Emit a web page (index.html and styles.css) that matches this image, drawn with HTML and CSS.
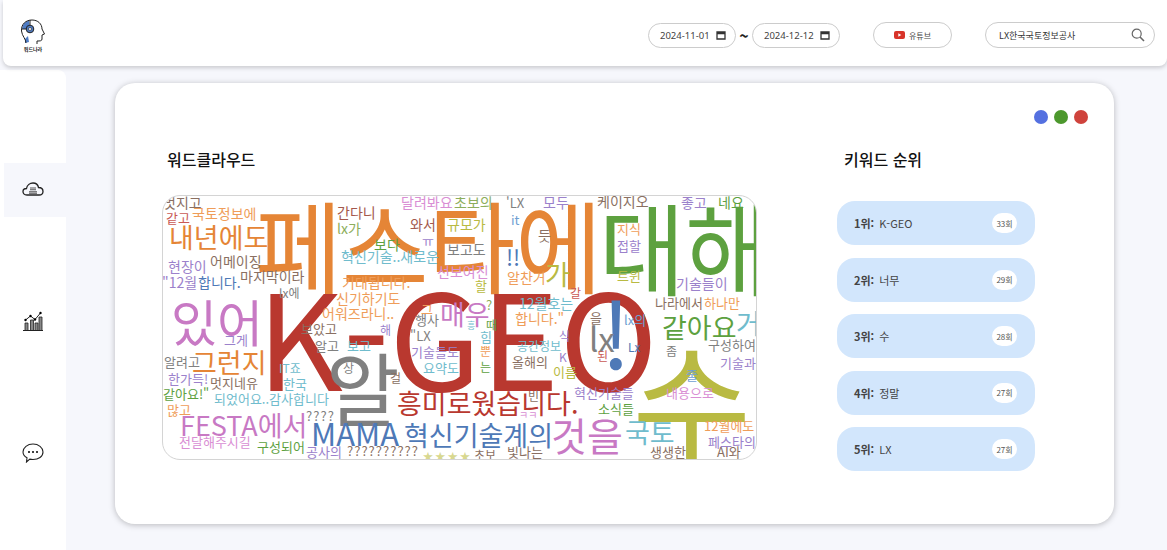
FILE: index.html
```html
<!DOCTYPE html>
<html lang="ko">
<head>
	<meta charset="utf-8">
	<title>워드클라우드</title>
	<link rel="stylesheet" href="styles.css">
</head>
<body>
	<header class="topbar">
		<div class="logo">
			<svg width="26" height="26" viewBox="0 0 26 26">
				<path d="M2 10 A9.500 9.500 0 0 1 9 1.500 L10 10 Z" fill="#4f7cc4"/>
				<path d="M2.500 12 L9 12 L6 22 C4 18 1.500 16 2.500 12 Z" fill="#fff"/>
				<path d="M5 20 L8 17 L9 23 L5 24 Z" fill="#4f7cc4"/>
				<path d="M6 24 C6 20 2 17 1.500 12 C1 5 6 1 12 1 C18 1 22 5 22 10 L24.500 15 L22 16 L22 20 C22 22 20 22 17 22 L17 25" fill="none" stroke="#222" stroke-width="1"/>
				<circle cx="10" cy="10" r="3.800" fill="#4f7cc4" stroke="#222" stroke-width="1"/>
				<circle cx="10" cy="10" r="1.500" fill="#fff" stroke="#222" stroke-width=".6"/>
				<path d="M1.500 10 H6 M10 1 V6" stroke="#222" stroke-width="1"/>
			</svg>
			<span class="logo-text">워드나라</span>
		</div>
		<div class="date-range">
			<div class="date-pill">
				<span>2024-11-01</span>
				<svg class="cal" width="10" height="10" viewBox="0 0 10 10"><path d="M1 2 H9 V9 H1 Z M1 3.500 H9" fill="none" stroke="#333" stroke-width="1.300"/></svg>
			</div>
			<span class="tilde">~</span>
			<div class="date-pill">
				<span>2024-12-12</span>
				<svg class="cal" width="10" height="10" viewBox="0 0 10 10"><path d="M1 2 H9 V9 H1 Z M1 3.500 H9" fill="none" stroke="#333" stroke-width="1.300"/></svg>
			</div>
		</div>
		<button class="yt-btn">
			<svg width="11" height="8" viewBox="0 0 11 8"><rect width="11" height="8" rx="2" fill="#d8342a"/><path d="M4.300 2.300 L7.300 4 L4.300 5.700 Z" fill="#fff"/></svg>
			<span>유튜브</span>
		</button>
		<div class="search">
			<span>LX한국국토정보공사</span>
			<svg width="14" height="14" viewBox="0 0 14 14"><circle cx="5.700" cy="5.700" r="4.500" fill="none" stroke="#666" stroke-width="1.200"/><path d="M9 9 L13 13" stroke="#666" stroke-width="1.600"/></svg>
		</div>
	</header>

	<div class="layout">
		<nav class="sidebar">
			<div class="nav-item active">
				<svg width="22" height="14" viewBox="0 0 22 14"><path d="M5 13 C2 13 1 11 1 9.500 C1 7.500 2.500 6.500 4.500 6.500 C5 3 8 1 11 1 C14 1 16 3 16.500 5.500 C19 5.500 21 7 21 9.500 C21 11.500 19.500 13 17 13 Z" fill="none" stroke="#222" stroke-width="1.300"/><path d="M8 6 H14 M8 7.800 H14 M7 9.800 H15 M7 11.300 H15" stroke="#555" stroke-width="1.100"/></svg>
			</div>
			<div class="nav-item">
				<svg width="20" height="20" viewBox="0 0 20 20"><path d="M2 19 V12 H5 V19 M7.500 19 V9 H10.500 V19 M12 19 V12 H15 V19 M16 19 V6 H19 V19" fill="#888" stroke="#222" stroke-width=".8"/><path d="M0 19.500 H20" stroke="#222"/><path d="M2.500 9 L7.500 5 L12 8.500 L17.500 2" fill="none" stroke="#222" stroke-width="1"/><circle cx="2.500" cy="9" r="1.200"/><circle cx="7.500" cy="5" r="1.200"/><circle cx="12" cy="8.500" r="1.200"/><circle cx="17.500" cy="2" r="1.200"/></svg>
			</div>
			<div class="nav-item">
				<svg width="22" height="20" viewBox="0 0 22 20"><path d="M11 1 C16.500 1 21 4.500 21 9 C21 13.500 16.500 16.500 11 16.500 C9.800 16.500 8.800 16.400 7.800 16.100 L4.500 19 L5 14.800 C2.500 13.400 1 11.400 1 9 C1 4.500 5.500 1 11 1 Z" fill="none" stroke="#222" stroke-width="1.100"/><circle cx="7" cy="9" r="1"/><circle cx="11" cy="9" r="1"/><circle cx="15" cy="9" r="1"/></svg>
			</div>
		</nav>

		<main class="card">
			<div class="dots">
				<span class="dot dot-blue"></span>
				<span class="dot dot-green"></span>
				<span class="dot dot-red"></span>
			</div>
			<div class="columns">
				<section class="cloud-col">
					<h2 class="title">워드클라우드</h2>
					<div class="cloud">
						<svg class="cloud-svg" viewBox="162 195 595 265" width="595" height="265">
							<text x="255" y="286" font-size="100" textLength="347" lengthAdjust="spacingAndGlyphs" class="c-orange">페스타에</text>
							<text x="599" y="288" font-size="100" textLength="172" lengthAdjust="spacingAndGlyphs" class="c-green">대해</text>
							<text x="257" y="391" font-size="133" class="c-red">K-GEO</text>
							<text x="632" y="454" font-size="130" class="c-olive">수</text>
							<text x="326" y="420" font-size="80" class="c-gray">알</text>
							<text x="601" y="370" font-size="92" class="c-blue">!</text>
							<text x="589" y="352" font-size="33" class="c-gray">lx</text>
							<text x="171" y="342" font-size="50" class="c-pink">있어</text>
							<text x="169" y="248" font-size="27" class="c-orange">내년에도</text>
							<text x="192" y="373" font-size="27" class="c-orange">그런지</text>
							<text x="440" y="325" font-size="27" class="c-pink">매우</text>
							<text x="662" y="338" font-size="27" class="c-green">같아요</text>
							<text x="736" y="334" font-size="27" class="c-cyan">거</text>
							<text x="545" y="285" font-size="27" class="c-olive">가</text>
							<text x="397" y="414" font-size="27" class="c-red">흥미로웠습니다.</text>
							<text x="180" y="436" font-size="27" class="c-pink">FESTA에서</text>
							<text x="311" y="446" font-size="31" class="c-blue">MAMA</text>
							<text x="404" y="446" font-size="27" class="c-blue">혁신기술계의</text>
							<text x="551" y="451" font-size="39" class="c-pink">것을</text>
							<text x="625" y="443" font-size="27" class="c-cyan">국토</text>
							<text x="506" y="266" font-size="22" class="c-blue">!!</text>

							<text x="163" y="208" font-size="14" class="c-brown">멋지고</text>
							<text x="166" y="223" font-size="13" class="c-rose">같고</text>
							<text x="192" y="219" font-size="14" class="c-peach">국토정보에</text>
							<text x="337" y="218" font-size="14" class="c-rust">간다니</text>
							<text x="337" y="234" font-size="14" class="c-lime">lx가</text>
							<text x="410" y="230" font-size="14" class="c-rust">와서</text>
							<text x="401" y="208" font-size="14" class="c-lpink">달려봐요</text>
							<text x="454" y="208" font-size="14" class="c-lime">초보의</text>
							<text x="447" y="230" font-size="14" class="c-olive">규모가</text>
							<text x="374" y="250" font-size="14" class="c-green">보다</text>
							<text x="422" y="246" font-size="13" class="c-purple">ㅠ</text>
							<text x="341" y="262" font-size="14" class="c-cyan">혁신기술..새로운</text>
							<text x="447" y="255" font-size="14" class="c-gray">보고도</text>
							<text x="437" y="277" font-size="14" class="c-lpink">선보여진</text>
							<text x="168" y="272" font-size="14" class="c-purple">현장이</text>
							<text x="210" y="267" font-size="14" class="c-brown">어메이징</text>
							<text x="240" y="282" font-size="14" class="c-brown">마지막이라</text>
							<text x="162" y="288" font-size="14" class="c-purple">"12월</text>
							<text x="198" y="288" font-size="14" class="c-blue">합니다.</text>
							<text x="279" y="298" font-size="12" class="c-gray">lx에</text>
							<text x="342" y="288" font-size="14" class="c-peach">기대됩니다.</text>
							<text x="336" y="304" font-size="14" class="c-peach">신기하기도</text>
							<text x="322" y="319" font-size="14" class="c-peach">어워즈라니..</text>
							<text x="506" y="208" font-size="13" class="c-gray">'LX</text>
							<text x="543" y="208" font-size="14" class="c-purple">모두</text>
							<text x="597" y="207" font-size="14" class="c-brown">케이지오</text>
							<text x="681" y="208" font-size="14" class="c-purple">좋고</text>
							<text x="718" y="208" font-size="14" class="c-green">네요</text>
							<text x="511" y="225" font-size="13" class="c-sky">it</text>
							<text x="538" y="241" font-size="14" class="c-brown">듯</text>
							<text x="617" y="234" font-size="13" class="c-peach">지식</text>
							<text x="617" y="251" font-size="13" class="c-purple">접할</text>
							<text x="507" y="283" font-size="14" class="c-peach">알찬거</text>
							<text x="617" y="281" font-size="13" class="c-olive">트윈</text>
							<text x="676" y="289" font-size="14" class="c-purple">기술들이</text>
							<text x="655" y="308" font-size="13" class="c-brown">나라에서</text>
							<text x="704" y="308" font-size="13" class="c-peach">하나만</text>
							<text x="570" y="298" font-size="12" class="c-rose">갈</text>
							<text x="475" y="291" font-size="13" class="c-olive">할</text>
							<text x="519" y="309" font-size="14" class="c-cyan">12월호는</text>
							<text x="515" y="324" font-size="14" class="c-peach">합니다."</text>
							<text x="421" y="314" font-size="13" class="c-peach">그</text>
							<text x="415" y="325" font-size="13" class="c-gray">행사</text>
							<text x="486" y="310" font-size="13" class="c-lime">?</text>
							<text x="486" y="330" font-size="12" class="c-green">때</text>
							<text x="467" y="329" font-size="9" class="c-cyan">흥</text>
							<text x="590" y="323" font-size="13" class="c-brown">을</text>
							<text x="624" y="325" font-size="13" class="c-sky">lx의</text>
							<text x="480" y="342" font-size="13" class="c-cyan">힘</text>
							<text x="480" y="356" font-size="12" class="c-peach">뿐</text>
							<text x="480" y="372" font-size="12" class="c-green">는</text>
							<text x="559" y="341" font-size="12" class="c-purple">식</text>
							<text x="517" y="351" font-size="12" class="c-cyan">공간정보</text>
							<text x="559" y="362" font-size="12" class="c-purple">K</text>
							<text x="628" y="352" font-size="12" class="c-blue">Lx</text>
							<text x="708" y="350" font-size="13" class="c-gray">구성하여</text>
							<text x="720" y="368" font-size="13" class="c-purple">기술과</text>
							<text x="666" y="356" font-size="12" class="c-gray">좀</text>
							<text x="597" y="361" font-size="12" class="c-rose">된</text>
							<text x="512" y="367" font-size="13" class="c-brown">올해의</text>
							<text x="553" y="377" font-size="13" class="c-olive">이름</text>
							<text x="686" y="380" font-size="13" class="c-sky">줄</text>
							<text x="666" y="398" font-size="13" class="c-lpink">내용으로</text>
							<text x="574" y="398" font-size="13" class="c-purple">혁신기술들</text>
							<text x="598" y="414" font-size="13" class="c-green">소식들</text>
							<text x="519" y="419" font-size="10" class="c-lpink">ㅋㅋ</text>
							<text x="528" y="401" font-size="12" class="c-brown">빈</text>
							<text x="390" y="383" font-size="12" class="c-brown">걸</text>
							<text x="301" y="334" font-size="13" class="c-brown">보았고</text>
							<text x="315" y="351" font-size="13" class="c-gray">알고</text>
							<text x="347" y="351" font-size="13" class="c-cyan">보고</text>
							<text x="380" y="335" font-size="12" class="c-purple">해</text>
							<text x="410" y="341" font-size="13" class="c-gray">"LX</text>
							<text x="411" y="357" font-size="13" class="c-purple">기술들도</text>
							<text x="423" y="373" font-size="13" class="c-cyan">요약도</text>
							<text x="224" y="345" font-size="13" class="c-purple">그게</text>
							<text x="164" y="367" font-size="13" class="c-gray">알려고</text>
							<text x="168" y="384" font-size="13" class="c-purple">한가득!</text>
							<text x="210" y="388" font-size="13" class="c-brown">멋지네유</text>
							<text x="279" y="373" font-size="12" class="c-cyan">IT죠</text>
							<text x="283" y="389" font-size="13" class="c-cyan">한국</text>
							<text x="343" y="373" font-size="12" class="c-gray">상</text>
							<text x="163" y="399" font-size="13" class="c-green">같아요!"</text>
							<text x="214" y="404" font-size="13" class="c-cyan">되었어요..감사합니다</text>
							<text x="167" y="415" font-size="13" class="c-peach">많고</text>
							<text x="306" y="421" font-size="13" textLength="28" class="c-gray">????</text>
							<text x="179" y="447" font-size="13" class="c-lpink">전달해주시길</text>
							<text x="257" y="452" font-size="13" class="c-green">구성되어</text>
							<text x="306" y="457" font-size="13" class="c-purple">공사의</text>
							<text x="347" y="456" font-size="13" textLength="71" class="c-brown">??????????</text>
							<text x="423" y="460" font-size="10" textLength="47" class="c-pale">★★★★</text>
							<text x="474" y="460" font-size="12" class="c-brown">초보</text>
							<text x="507" y="457" font-size="13" class="c-brown">빛나는</text>
							<text x="650" y="457" font-size="13" class="c-brown">생생한</text>
							<text x="704" y="431" font-size="13" class="c-peach">12월에도</text>
							<text x="708" y="447" font-size="13" class="c-purple">페스타의</text>
							<text x="717" y="457" font-size="13" class="c-brown">AI와</text>
						</svg>
					</div>
				</section>

				<section class="rank-col">
					<h2 class="title">키워드 순위</h2>
					<ul class="rank-list">
						<li class="rank-row"><b>1위:</b><span class="word">K-GEO</span><span class="count">33회</span></li>
						<li class="rank-row"><b>2위:</b><span class="word">너무</span><span class="count">29회</span></li>
						<li class="rank-row"><b>3위:</b><span class="word">수</span><span class="count">28회</span></li>
						<li class="rank-row"><b>4위:</b><span class="word">정말</span><span class="count">27회</span></li>
						<li class="rank-row"><b>5위:</b><span class="word">LX</span><span class="count">27회</span></li>
					</ul>
				</section>
			</div>
		</main>
	</div>
</body>
</html>
```

FILE: styles.css
```css
* {
	box-sizing: border-box;
}
html, body {
	height: 550px;
	overflow: hidden;
}
body {
	margin: 0;
	background-color: #f6f7fc;
	font-family: "Noto Sans CJK KR", "Noto Sans", sans-serif;
	color: #222;
}

/* top bar */
.topbar {
	display: flex;
	align-items: center;
	height: 66px;
	margin-left: 3px;
	padding: 4px 12px 0 17px;
	background-color: #fff;
	border-radius: 0 0 8px 8px;
	box-shadow: 0 2px 4px rgba(0, 0, 0, 0.18);
	position: relative;
}
.logo {
	display: flex;
	flex-direction: column;
	align-items: center;
	width: 26px;
}
.logo-text {
	font-size: 5px;
	line-height: 7px;
	font-weight: 700;
}
.date-range {
	display: flex;
	align-items: center;
	gap: 3px;
	margin-left: auto;
}
.date-pill {
	display: flex;
	align-items: center;
	justify-content: space-between;
	width: 88px;
	height: 25px;
	padding: 0 9px 0 11px;
	border: 1px solid #ccc;
	border-radius: 13px;
	font-size: 9.500px;
	font-family: "Noto Sans", sans-serif;
	color: #444;
}
.tilde {
	width: 10px;
	font-size: 16px;
	line-height: 16px;
	font-weight: 700;
	text-align: center;
}
.yt-btn {
	display: flex;
	align-items: center;
	justify-content: center;
	gap: 4px;
	width: 79px;
	height: 26px;
	margin-left: 33px;
	background-color: #fff;
	border: 1px solid #ccc;
	border-radius: 13px;
	font-family: inherit;
	font-size: 8px;
	color: #444;
}
.search {
	display: flex;
	align-items: center;
	justify-content: space-between;
	width: 170px;
	height: 26px;
	margin-left: 33px;
	padding: 0 9px 0 13px;
	border: 1px solid #ccc;
	border-radius: 13px;
	font-size: 9px;
	color: #333;
}

/* sidebar and content */
.layout {
	display: flex;
	align-items: flex-start;
}
.sidebar {
	display: flex;
	flex-direction: column;
	gap: 78px;
	width: 66px;
	height: 484px;
	margin-top: 4px;
	padding: 93px 0 0 4px;
	background-color: #fff;
	border-radius: 0 8px 0 0;
}
.nav-item {
	display: flex;
	align-items: center;
	justify-content: center;
	height: 54px;
	padding: 0 4px 2px 0;
}
.nav-item.active {
	background-color: #f6f7fc;
}
.card {
	width: 999px;
	height: 441px;
	margin: 17px 0 0 49px;
	padding: 27px 26px 0 47px;
	background-color: #fff;
	border-radius: 20px;
	box-shadow: 0 1px 6px rgba(0, 0, 0, 0.25);
}
.dots {
	display: flex;
	justify-content: flex-end;
	gap: 6px;
	height: 14px;
}
.dot {
	width: 14px;
	height: 14px;
	border-radius: 50%;
}
.dot-blue {
	background-color: #5470e0;
}
.dot-green {
	background-color: #4c982d;
}
.dot-red {
	background-color: #cf433c;
}
.columns {
	display: flex;
	margin-top: 23px;
}
.title {
	margin: 0;
	font-size: 16px;
	line-height: 24px;
	font-weight: 500;
	color: #111;
}
.cloud-col {
	width: 675px;
}
.cloud-col .title {
	padding-left: 5px;
}
.cloud {
	width: 595px;
	height: 265px;
	margin-top: 24px;
	border: 1px solid #d4d4d4;
	border-radius: 18px;
	overflow: hidden;
	background-color: #fff;
}
.cloud-svg {
	display: block;
	margin: -1px;
}
.rank-col .title {
	padding-left: 7px;
}
.rank-list {
	display: flex;
	flex-direction: column;
	gap: 12.500px;
	width: 198px;
	margin: 30px 0 0;
	padding: 0;
	list-style: none;
}
.rank-row {
	display: flex;
	align-items: center;
	height: 44px;
	padding: 0 18px 0 17px;
	background-color: #d2e6fc;
	border-radius: 18px;
	font-size: 11px;
	color: #444;
}
.rank-row b {
	font-weight: 700;
	margin-right: 5px;
}
.count {
	display: flex;
	align-items: center;
	justify-content: center;
	width: 25px;
	height: 20px;
	margin-left: auto;
	background-color: #fff;
	border-radius: 10px;
	font-size: 8px;
	color: #555;
}

/* word colours */
.c-orange { fill: #e58536; }
.c-green { fill: #5da13f; }
.c-red { fill: #b9382f; }
.c-olive { fill: #b9ba42; }
.c-gray { fill: #808080; }
.c-blue { fill: #4e79b7; }
.c-pink { fill: #c879c4; }
.c-cyan { fill: #70bccd; }
.c-purple { fill: #9b81cb; }
.c-brown { fill: #8a6f62; }
.c-rose { fill: #c95a55; }
.c-rust { fill: #a3584c; }
.c-lime { fill: #8dae5c; }
.c-peach { fill: #ef9d59; }
.c-lpink { fill: #d98ed4; }
.c-sky { fill: #6f9fd2; }
.c-pale { fill: #d8d890; }
```
